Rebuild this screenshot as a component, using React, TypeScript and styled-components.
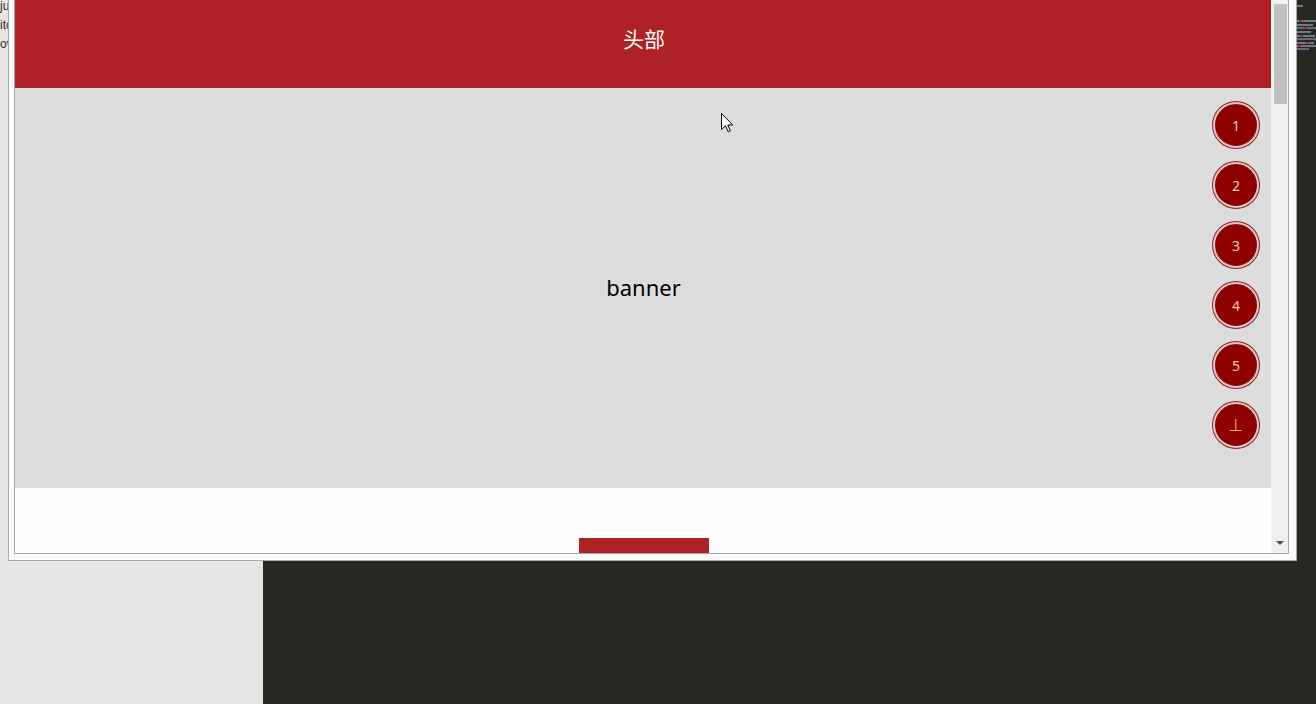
import styled, { createGlobalStyle } from 'styled-components';

const GlobalStyle = createGlobalStyle`
  html, body {
    margin: 0;
    padding: 0;
  }
  body {
    width: 1316px;
    height: 704px;
    overflow: hidden;
    font-family: "Noto Sans", "Noto Sans CJK SC", sans-serif;
  }
`;

const Desktop = styled.div`
  position: relative;
  width: 1316px;
  height: 704px;
  display: grid;
  grid-template-columns: 263px 1fr;
  overflow: hidden;
`;

const Sidebar = styled.div`
  background: #e6e6e6;
`;

const FileName = styled.div<{ first?: boolean }>`
  font-family: "Liberation Sans", Arial, sans-serif;
  font-size: 12px;
  line-height: 19px;
  color: #3b1f1f;
  white-space: nowrap;
  margin-top: ${p => (p.first ? '-3px' : '0')};
`;

const Editor = styled.div`
  background: #272822;
  display: flex;
  justify-content: flex-end;
`;

const Minimap = styled.svg`
  width: 20px;
  height: 60px;
`;

const BrowserWindow = styled.div`
  position: absolute;
  left: 8px;
  top: 0;
  width: 1289px;
  height: 561px;
  box-sizing: border-box;
  background: #fbfbfb;
  border: 1px solid #aaaaaa;
  border-top: none;
  padding: 0 7px 6px 5px;
`;

const Viewport = styled.div`
  position: relative;
  display: flex;
  height: 554px;
  box-sizing: border-box;
  border: 1px solid #a8a8a8;
  border-top: none;
  background: #fff;
`;

const Page = styled.div`
  flex: 1;
  overflow: hidden;
  display: flex;
  flex-direction: column;
`;

const Header = styled.header`
  flex: none;
  height: 88px;
  background: #ad2024;
  color: #fff;
  font-family: "Noto Sans CJK SC", "Noto Sans", sans-serif;
  font-size: 21px;
  display: flex;
  align-items: center;
  justify-content: center;
  padding: 0 0 12px 2px;
  box-sizing: border-box;
`;

const Banner = styled.section`
  flex: none;
  height: 400px;
  background: #dddddd;
  color: #000;
  font-size: 22px;
  display: flex;
  align-items: center;
  justify-content: center;
  padding: 0 0 2px 1px;
  box-sizing: border-box;
`;

const Floor = styled.section`
  flex: none;
  height: 300px;
  background: #fefefe;
  display: flex;
  justify-content: center;
  padding: 50px 0 0 2px;
  box-sizing: border-box;
`;

const FloorTitle = styled.div`
  width: 130px;
  height: 40px;
  background: #ad2024;
`;

const Scrollbar = styled.div`
  flex: none;
  width: 17px;
  background: #f0f0f0;
  display: flex;
  flex-direction: column;
  align-items: center;
  justify-content: space-between;
  padding: 4px 0 8px 2px;
  box-sizing: border-box;
`;

const Thumb = styled.div`
  width: 13px;
  height: 100px;
  background: #c1c1c1;
`;

const ArrowDown = styled.div`
  width: 0;
  height: 0;
  border-left: 4px solid transparent;
  border-right: 4px solid transparent;
  border-top: 4px solid #505050;
  margin-left: -1px;
`;

const FloorNav = styled.nav`
  position: absolute;
  top: 102px;
  right: 29px;
  display: flex;
  flex-direction: column;
  gap: 14px;
`;

const NavDot = styled.a<{ glyph?: boolean }>`
  width: 42px;
  height: 42px;
  border-radius: 50%;
  background: #8f0000;
  border: 2px solid #d6cccc;
  box-shadow: 0 0 0 1px #9d1a1d;
  color: ${p => (p.glyph ? '#f0a860' : '#f5cf92')};
  font-family: ${p => (p.glyph ? '"DejaVu Sans"' : '"Noto Sans"')}, sans-serif;
  font-size: ${p => (p.glyph ? '17px' : '14px')};
  display: flex;
  align-items: center;
  justify-content: center;
  cursor: pointer;
`;

const Cursor = styled.svg`
  position: absolute;
  left: 721px;
  top: 113px;
  width: 13px;
  height: 20px;
`;

const dots = ['1', '2', '3', '4', '5', '⊥'];

const minimapRows = [
  { y: 5, w: 6, c: '#6f7b8a' },
  { y: 20, w: 20, c: '#6f7b8a', r: 3 },
  { y: 24, w: 16, c: '#6f7b8a' },
  { y: 27, w: 19, c: '#5f6b7a', r: 8 },
  { y: 31, w: 14, c: '#6f7b8a' },
  { y: 35, w: 18, c: '#6f7b8a', r: 4 },
  { y: 38, w: 20, c: '#5f6b7a' },
  { y: 42, w: 17, c: '#6f7b8a', r: 10 },
  { y: 45, w: 20, c: '#6f7b8a', r: 2 },
  { y: 48, w: 12, c: '#5f6b7a' },
];

export default function App() {
  return (
    <>
      <GlobalStyle />
      <Desktop>
        <Sidebar>
          <FileName first>jump.html</FileName>
          <FileName>itop.css</FileName>
          <FileName>ov-floor.js</FileName>
        </Sidebar>
        <Editor>
          <Minimap viewBox="0 0 20 60">
            {minimapRows.map(row => (
              <g key={row.y}>
                <rect x={1} y={row.y} width={row.w} height={2} fill={row.c} />
                {row.r !== undefined && (
                  <rect x={row.r} y={row.y} width={3} height={2} fill="#c2202c" />
                )}
              </g>
            ))}
          </Minimap>
        </Editor>
        <BrowserWindow>
          <Viewport>
            <Page>
              <Header>头部</Header>
              <Banner>banner</Banner>
              <Floor>
                <FloorTitle />
              </Floor>
            </Page>
            <Scrollbar>
              <Thumb />
              <ArrowDown />
            </Scrollbar>
            <FloorNav>
              {dots.map(d => (
                <NavDot key={d} glyph={d === '⊥'}>
                  {d}
                </NavDot>
              ))}
            </FloorNav>
          </Viewport>
        </BrowserWindow>
        <Cursor viewBox="0 0 13 20">
          <path
            d="M0.5 0.5 L0.5 16.5 L4.5 12.8 L7.2 18.8 L9.4 17.8 L6.8 12 L11.8 12 Z"
            fill="#fff"
            stroke="#000"
            strokeWidth="1"
            strokeLinejoin="miter"
          />
        </Cursor>
      </Desktop>
    </>
  );
}
